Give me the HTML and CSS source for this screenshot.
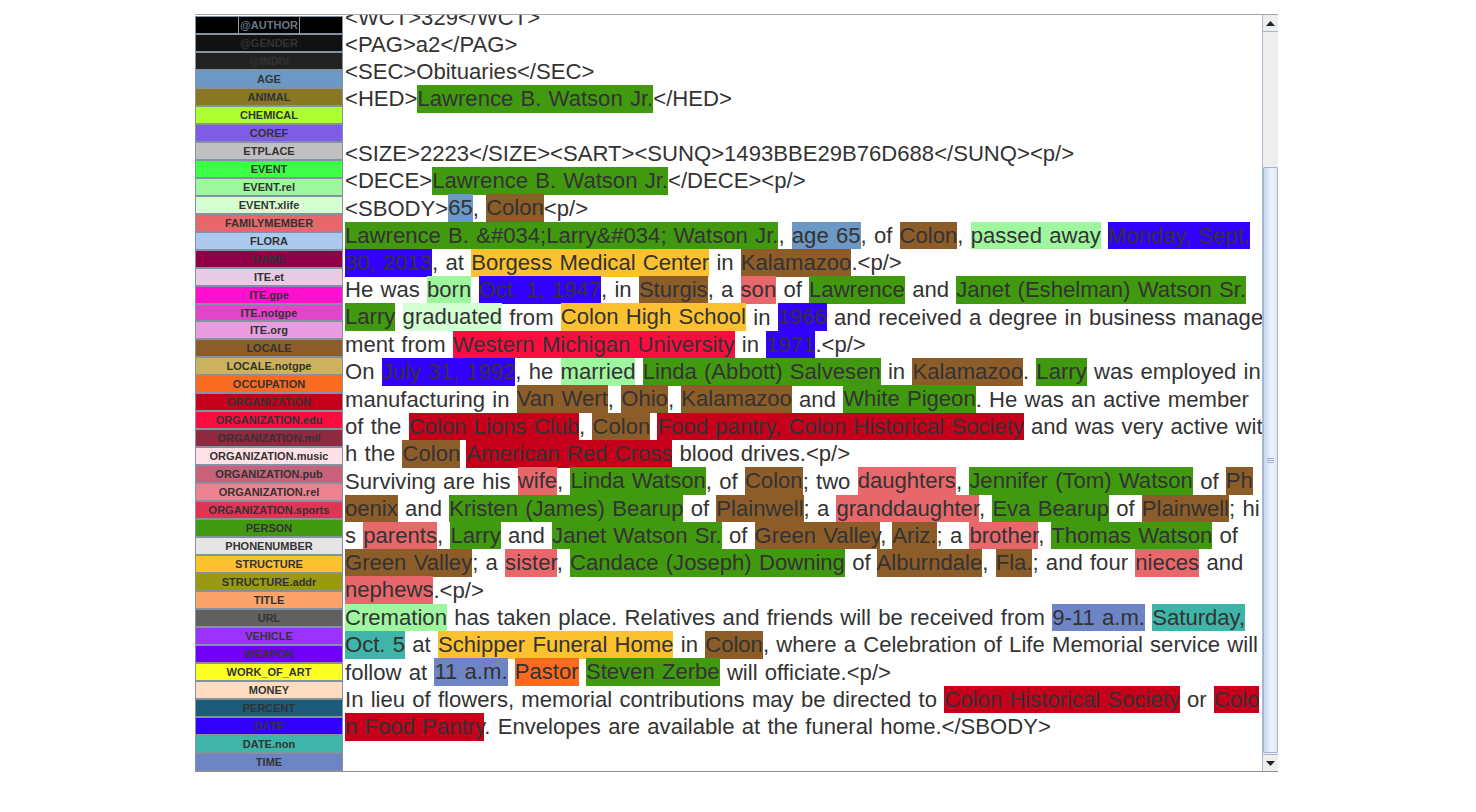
FILE: index.html
```html
<!DOCTYPE html>
<html>
<head>
<meta charset="utf-8">
<title>Annotator</title>
<link rel="stylesheet" href="styles.css">
</head>
<body>
<div class="frame">
  <div class="tags">
    <div class="tag author"><span class="focus">@AUTHOR</span></div>
    <div class="tag gender">@GENDER</div>
    <div class="tag indiv">@INDIV</div>
    <div class="tag age">AGE</div>
    <div class="tag animal">ANIMAL</div>
    <div class="tag chemical">CHEMICAL</div>
    <div class="tag coref">COREF</div>
    <div class="tag etplace">ETPLACE</div>
    <div class="tag event">EVENT</div>
    <div class="tag eventrel">EVENT.rel</div>
    <div class="tag eventxlife">EVENT.xlife</div>
    <div class="tag family">FAMILYMEMBER</div>
    <div class="tag flora">FLORA</div>
    <div class="tag game">GAME</div>
    <div class="tag iteet">ITE.et</div>
    <div class="tag itegpe">ITE.gpe</div>
    <div class="tag itenotgpe">ITE.notgpe</div>
    <div class="tag iteorg">ITE.org</div>
    <div class="tag locale">LOCALE</div>
    <div class="tag localenot">LOCALE.notgpe</div>
    <div class="tag occupation">OCCUPATION</div>
    <div class="tag org">ORGANIZATION</div>
    <div class="tag orgedu">ORGANIZATION.edu</div>
    <div class="tag orgmil">ORGANIZATION.mil</div>
    <div class="tag orgmusic">ORGANIZATION.music</div>
    <div class="tag orgpub">ORGANIZATION.pub</div>
    <div class="tag orgrel">ORGANIZATION.rel</div>
    <div class="tag orgsports">ORGANIZATION.sports</div>
    <div class="tag person">PERSON</div>
    <div class="tag phone">PHONENUMBER</div>
    <div class="tag structure">STRUCTURE</div>
    <div class="tag structaddr">STRUCTURE.addr</div>
    <div class="tag title">TITLE</div>
    <div class="tag url">URL</div>
    <div class="tag vehicle">VEHICLE</div>
    <div class="tag weapon">WEAPON</div>
    <div class="tag woa">WORK_OF_ART</div>
    <div class="tag money">MONEY</div>
    <div class="tag percent">PERCENT</div>
    <div class="tag date">DATE</div>
    <div class="tag datenon">DATE.non</div>
    <div class="tag time">TIME</div>
  </div>
  <div class="text">
    <div class="content">
      <div class="ln">&lt;WCT&gt;329&lt;/WCT&gt;</div>
      <div class="ln">&lt;PAG&gt;a2&lt;/PAG&gt;</div>
      <div class="ln">&lt;SEC&gt;Obituaries&lt;/SEC&gt;</div>
      <div class="ln">&lt;HED&gt;<span class="h person">Lawrence B. Watson Jr.</span>&lt;/HED&gt;</div>
      <div class="ln">&nbsp;</div>
      <div class="ln">&lt;SIZE&gt;2223&lt;/SIZE&gt;&lt;SART&gt;&lt;SUNQ&gt;1493BBE29B76D688&lt;/SUNQ&gt;&lt;p/&gt;</div>
      <div class="ln">&lt;DECE&gt;<span class="h person">Lawrence B. Watson Jr.</span>&lt;/DECE&gt;&lt;p/&gt;</div>
      <div class="ln">&lt;SBODY&gt;<span class="h age">65</span>, <span class="h locale">Colon</span>&lt;p/&gt;</div>
      <div class="ln"><span class="h person">Lawrence B. &amp;#034;Larry&amp;#034; Watson Jr.</span>, <span class="h age">age 65</span>, of <span class="h locale">Colon</span>, <span class="h eventrel">passed away</span> <span class="h date">Monday, Sept.</span></div>
      <div class="ln"><span class="h date">30, 2013</span>, at <span class="h structure">Borgess Medical Center</span> in <span class="h locale">Kalamazoo</span>.&lt;p/&gt;</div>
      <div class="ln">He was <span class="h eventrel">born</span> <span class="h date">Oct. 1, 1947</span>, in <span class="h locale">Sturgis</span>, a <span class="h family">son</span> of <span class="h person">Lawrence</span> and <span class="h person">Janet (Eshelman) Watson Sr.</span></div>
      <div class="ln"><span class="h person">Larry</span> <span class="h eventxlife">graduated</span> from <span class="h structure">Colon High School</span> in <span class="h date">1966</span> and received a degree in business manage</div>
      <div class="ln">ment from <span class="h orgedu">Western Michigan University</span> in <span class="h date">1971</span>.&lt;p/&gt;</div>
      <div class="ln">On <span class="h date">July 31, 1992</span>, he <span class="h eventrel">married</span> <span class="h person">Linda (Abbott) Salvesen</span> in <span class="h locale">Kalamazoo</span>. <span class="h person">Larry</span> was employed in</div>
      <div class="ln">manufacturing in <span class="h locale">Van Wert</span>, <span class="h locale">Ohio</span>, <span class="h locale">Kalamazoo</span> and <span class="h person">White Pigeon</span>. He was an active member</div>
      <div class="ln">of the <span class="h org">Colon Lions Club</span>, <span class="h locale">Colon</span> <span class="h org">Food pantry, Colon Historical Society</span> and was very active wit</div>
      <div class="ln">h the <span class="h locale">Colon</span> <span class="h org">American Red Cross</span> blood drives.&lt;p/&gt;</div>
      <div class="ln">Surviving are his <span class="h family">wife</span>, <span class="h person">Linda Watson</span>, of <span class="h locale">Colon</span>; two <span class="h family">daughters</span>, <span class="h person">Jennifer (Tom) Watson</span> of <span class="h locale">Ph</span></div>
      <div class="ln"><span class="h locale">oenix</span> and <span class="h person">Kristen (James) Bearup</span> of <span class="h locale">Plainwell</span>; a <span class="h family">granddaughter</span>, <span class="h person">Eva Bearup</span> of <span class="h locale">Plainwell</span>; hi</div>
      <div class="ln">s <span class="h family">parents</span>, <span class="h person">Larry</span> and <span class="h person">Janet Watson Sr.</span> of <span class="h locale">Green Valley</span>, <span class="h locale">Ariz.</span>; a <span class="h family">brother</span>, <span class="h person">Thomas Watson</span> of</div>
      <div class="ln"><span class="h locale">Green Valley</span>; a <span class="h family">sister</span>, <span class="h person">Candace (Joseph) Downing</span> of <span class="h locale">Alburndale</span>, <span class="h locale">Fla.</span>; and four <span class="h family">nieces</span> and</div>
      <div class="ln"><span class="h family">nephews</span>.&lt;p/&gt;</div>
      <div class="ln"><span class="h eventrel">Cremation</span> has taken place. Relatives and friends will be received from <span class="h time">9-11 a.m.</span> <span class="h datenon">Saturday,</span></div>
      <div class="ln"><span class="h datenon">Oct. 5</span> at <span class="h structure">Schipper Funeral Home</span> in <span class="h locale">Colon</span>, where a Celebration of Life Memorial service will</div>
      <div class="ln">follow at <span class="h time">11 a.m.</span> <span class="h occupation">Pastor</span> <span class="h person">Steven Zerbe</span> will officiate.&lt;p/&gt;</div>
      <div class="ln">In lieu of flowers, memorial contributions may be directed to <span class="h org">Colon Historical Society</span> or <span class="h org">Colo</span></div>
      <div class="ln"><span class="h org">n Food Pantry</span>. Envelopes are available at the funeral home.&lt;/SBODY&gt;</div>
    </div>
  </div>
  <div class="vscroll">
    <div class="sbtn up"><svg width="9" height="5" viewBox="0 0 9 5"><path d="M0 5 L4.5 0 L9 5 Z" fill="#222"/></svg></div>
    <div class="track">
      <div class="track-gap"></div>
      <div class="thumb"><div class="grip"></div></div>
    </div>
    <div class="sbtn down"><svg width="9" height="5" viewBox="0 0 9 5"><path d="M0 0 L4.5 5 L9 0 Z" fill="#222"/></svg></div>
  </div>
</div>
</body>
</html>
```

FILE: styles.css
```css
html, body {
  margin: 0;
  padding: 0;
  background: #ffffff;
}

.frame {
  margin-top: 14px;
  margin-left: 195px;
  width: 1083px;
  height: 758px;
  box-sizing: border-box;
  border-top: 1px solid #a6a6a6;
  border-bottom: 1px solid #8e8e8e;
  box-shadow: 0 3px 0 #ececec;
  display: flex;
  overflow: hidden;
}

.tags {
  width: 148px;
  flex: none;
  display: flex;
  flex-direction: column;
  padding-top: 1px;
}

.tag {
  height: 18px;
  box-sizing: border-box;
  border: 1px solid #8391a0;
  font-family: "Liberation Sans", Arial, sans-serif;
  font-weight: bold;
  font-size: 11px;
  line-height: 16px;
  color: #333333;
  text-align: center;
  white-space: nowrap;
  overflow: hidden;
  display: flex;
  justify-content: center;
}

.tag .focus {
  display: block;
  padding: 0 1px;
  border-left: 1px solid #8c9aa8;
  border-right: 1px solid #8c9aa8;
  color: #6a7886;
}

.text {
  flex: 1;
  overflow: hidden;
  background: #ffffff;
}

.content {
  margin-top: -11.5px;
  padding-left: 2px;
  font-family: "Liberation Sans", Arial, sans-serif;
  font-size: 22.1px;
  line-height: 27.3px;
  word-spacing: 1.1px;
  color: #333333;
}

.ln {
  height: 27.3px;
  white-space: nowrap;
}

.h {
  padding: 1.35px 0;
}

.vscroll {
  width: 16px;
  flex: none;
  display: flex;
  flex-direction: column;
  background: #eeeeee;
  border-left: 1px solid #a9b9cf;
  box-sizing: border-box;
}

.sbtn {
  height: 16px;
  flex: none;
  display: flex;
  align-items: center;
  justify-content: center;
  background: #eeeeee;
}

.sbtn.up {
  border-bottom: 1px solid #a3b6d6;
}

.sbtn.down {
  border-top: 1px solid #a3b6d6;
}

.track {
  flex: 1;
  display: flex;
  flex-direction: column;
}

.track-gap {
  height: 135px;
  flex: none;
}

.thumb {
  flex: 1;
  margin-bottom: 1px;
  box-sizing: border-box;
  border: 1px solid #9fb3d8;
  border-radius: 1px;
  background: linear-gradient(to right, #c9d8ef, #eef3fa 60%, #dde7f4);
  display: flex;
  align-items: center;
  justify-content: center;
}

.grip {
  width: 7px;
  height: 5px;
  border-top: 1px solid #9fb3d8;
  border-bottom: 1px solid #9fb3d8;
  box-sizing: border-box;
  background: linear-gradient(#9fb3d8, #9fb3d8) no-repeat 0 1px / 100% 1px;
}

/* tag colours */
.author { background: #000000; }
.gender { background: #121212; }
.indiv { background: #222222; }
.age { background: #6b98c4; }
.animal { background: #8a7724; }
.chemical { background: #adff2f; }
.coref { background: #7e5ce8; }
.etplace { background: #c0c0c0; }
.event { background: #3dff47; }
.eventrel { background: #9ef79e; }
.eventxlife { background: #d3ffd3; }
.family { background: #e8676b; }
.flora { background: #abc8ee; }
.game { background: #8f0047; }
.iteet { background: #e8cbe4; }
.itegpe { background: #ff0fd0; }
.itenotgpe { background: #e145c9; }
.iteorg { background: #ea9ce0; }
.locale { background: #8d5d29; }
.localenot { background: #ccb25e; }
.occupation { background: #fb6b1f; }
.org { background: #c6001b; }
.orgedu { background: #fc0c3f; }
.orgmil { background: #8e2a3f; }
.orgmusic { background: #fde1e6; }
.orgpub { background: #c9617a; }
.orgrel { background: #ef8290; }
.orgsports { background: #dd3653; }
.person { background: #41990f; }
.phone { background: #e5e5e5; }
.structure { background: #fbc12e; }
.structaddr { background: #999913; }
.title { background: #fba36b; }
.url { background: #606060; }
.vehicle { background: #9a33ff; }
.weapon { background: #7100f9; }
.woa { background: #fbff23; }
.money { background: #fddcbf; }
.percent { background: #1c5b79; }
.date { background: #3200ff; }
.datenon { background: #3fb4a9; }
.time { background: #6d85c5; }
```
